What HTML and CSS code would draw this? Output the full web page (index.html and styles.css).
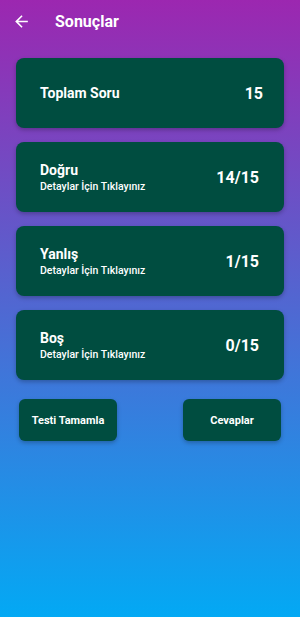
FILE: index.html
```html
<!DOCTYPE html>
<html lang="tr">
<head>
  <meta charset="UTF-8" />
  <meta name="viewport" content="width=device-width, initial-scale=1.0"/>
  <title>Sonuçlar</title>
  <link rel="stylesheet" href="styles.css">
</head>
<body>

  <header class="topbar">
    <button class="back-btn" aria-label="Geri">
      <svg width="19" height="19" viewBox="0 0 24 24"><path d="M20 11H7.83l5.59-5.59L12 4l-8 8 8 8 1.41-1.41L7.83 13H20v-2z" fill="#fff"/></svg>
    </button>
    <h1 class="title">Sonuçlar</h1>
  </header>

  <section class="results">
    <div class="card card-total">
      <div class="card-info">
        <div class="card-title">Toplam Soru</div>
      </div>
      <div class="card-value">15</div>
    </div>

    <div class="card">
      <div class="card-info">
        <div class="card-title">Doğru</div>
        <div class="card-sub">Detaylar İçin Tıklayınız</div>
      </div>
      <div class="card-value">14/15</div>
    </div>

    <div class="card">
      <div class="card-info">
        <div class="card-title">Yanlış</div>
        <div class="card-sub">Detaylar İçin Tıklayınız</div>
      </div>
      <div class="card-value">1/15</div>
    </div>

    <div class="card">
      <div class="card-info">
        <div class="card-title">Boş</div>
        <div class="card-sub">Detaylar İçin Tıklayınız</div>
      </div>
      <div class="card-value">0/15</div>
    </div>
  </section>

  <div class="actions">
    <button class="action-btn">Testi Tamamla</button>
    <button class="action-btn">Cevaplar</button>
  </div>

</body>
</html>
```

FILE: styles.css
```css
html, body {
  height: 100%;
}

body {
  margin: 0;
  font-family: Roboto, 'Noto Sans', sans-serif;
  color: white;
  background: linear-gradient(to bottom, #9c27b0 0%, #03a9f4 100%);
  min-height: 617px;
}

.topbar {
  display: flex;
  align-items: center;
  height: 43px;
  padding: 0 12px;
}

.back-btn {
  background: none;
  border: none;
  padding: 0;
  width: 19px;
  height: 19px;
  display: flex;
  cursor: pointer;
}

.title {
  margin: 0 0 0 24px;
  font-size: 16px;
  font-weight: 700;
}

.results {
  display: flex;
  flex-direction: column;
  gap: 14px;
  padding: 15px 16px 0;
}

.card {
  background: #004d40;
  border-radius: 8px;
  height: 70px;
  box-sizing: border-box;
  padding: 0 25px 0 24px;
  display: flex;
  justify-content: space-between;
  align-items: center;
  box-shadow: 0 2px 4px rgba(0,0,0,0.25);
}

.card-total {
  padding-right: 21px;
}

.card-title {
  font-size: 14px;
  font-weight: 700;
  line-height: 18px;
}

.card-sub {
  font-size: 10.5px;
  font-weight: 500;
  line-height: 14px;
  margin-top: 1px;
}

.card-value {
  font-size: 16px;
  font-weight: 700;
}

.actions {
  display: flex;
  justify-content: space-between;
  padding: 19px 19px 0;
}

.action-btn {
  width: 98px;
  height: 42px;
  background: #004d40;
  color: white;
  border: none;
  border-radius: 6px;
  font-family: Roboto, sans-serif;
  font-size: 11px;
  font-weight: 700;
  box-shadow: 0 2px 4px rgba(0,0,0,0.25);
  cursor: pointer;
}
```
